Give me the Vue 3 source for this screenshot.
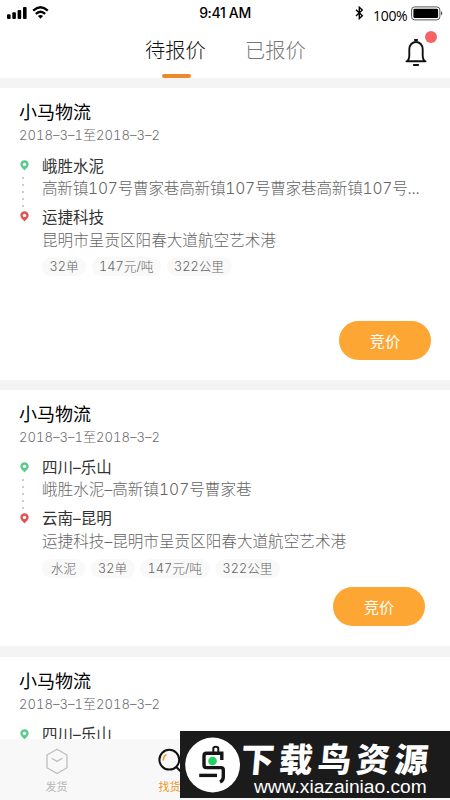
<script setup>
const cards = [
  {
    kind: 'first',
    from: '峨胜水泥',
    fromAddr: '高新镇107号曹家巷高新镇107号曹家巷高新镇107号...',
    to: '运捷科技',
    toAddr: '昆明市呈贡区阳春大道航空艺术港',
    tags: ['32单', '147元/吨', '322公里']
  },
  {
    kind: 'second',
    from: '四川–乐山',
    fromAddr: '峨胜水泥–高新镇107号曹家巷',
    to: '云南–昆明',
    toAddr: '运捷科技–昆明市呈贡区阳春大道航空艺术港',
    tags: ['水泥', '32单', '147元/吨', '322公里']
  },
  {
    kind: 'third',
    from: '四川–乐山'
  }
]
</script>

<template>
  <div class="screen">
    <header class="header">
      <div class="status">
        <div class="status-left">
          <svg class="signal" width="20" height="14" viewBox="0 0 20 14">
            <rect x="0" y="8.3" width="3.6" height="4.7" rx="1" />
            <rect x="5.3" y="6.2" width="3.6" height="6.8" rx="1" />
            <rect x="10.6" y="3.9" width="3.6" height="9.1" rx="1" />
            <rect x="16" y="1" width="3.6" height="12" rx="1" />
          </svg>
          <svg class="wifi" width="17" height="13" viewBox="0 0 17 13">
            <path d="M1.2 4.6Q8.5 -2 15.8 4.6" />
            <path d="M3.8 7.9Q8.5 3.6 13.2 7.9" />
            <path class="solid" d="M5.9 10Q8.5 7.8 11.1 10L8.5 12.7Z" />
          </svg>
        </div>
        <div class="time">9:41 AM</div>
        <div class="status-right">
          <svg class="bt" width="9" height="14" viewBox="0 0 9 14">
            <path d="M1 3.8L7.3 9.8L4.3 12.6V1.3L7.3 4.1L1 10" />
          </svg>
          <span class="percent">100%</span>
          <svg class="battery" width="33" height="15" viewBox="0 0 33 15">
            <rect class="case" x=".6" y=".9" width="28.3" height="13" rx="3.2" />
            <rect x="2.4" y="2.7" width="24.7" height="9.4" rx="1.4" />
            <path d="M30.3 5Q32.2 7.3 30.3 9.6Z" />
          </svg>
        </div>
      </div>
      <div class="tabs">
        <div class="tab active">待报价</div>
        <div class="tab">已报价</div>
        <div class="bell-box">
          <svg width="22" height="29" viewBox="0 0 22 29">
            <path class="line" d="M1.5 23.3H20.5M2.7 22.8Q4.3 20.8 4.3 18V11.3C4.3 6.9 7.3 4 11 4S17.7 6.9 17.7 11.3V18Q17.7 20.8 19.3 22.8" />
            <path class="line" d="M9.9 2H12.1M8.8 27H13.2" />
          </svg>
          <i class="dot"></i>
        </div>
      </div>
    </header>

    <main>
      <section v-for="card in cards" :key="card.kind" class="card" :class="card.kind">
        <h2>小马物流</h2>
        <div class="date">2018–3–1至2018–3–2</div>
        <div class="route">
          <div class="rail">
            <svg class="pin green" width="9" height="11" viewBox="0 0 9 11">
              <path d="M4.5 .3C2 .3.3 2 .3 4.3C.3 7 3 8.6 4.5 10.4C6 8.6 8.7 7 8.7 4.3C8.7 2 7 .3 4.5 .3Z" />
              <circle cx="4.5" cy="4.4" r="1.7" />
            </svg>
            <template v-if="card.to">
              <div class="dots"><i v-for="n in 5" :key="n"></i></div>
              <svg class="pin red" width="9" height="11" viewBox="0 0 9 11">
                <path d="M4.5 .3C2 .3.3 2 .3 4.3C.3 7 3 8.6 4.5 10.4C6 8.6 8.7 7 8.7 4.3C8.7 2 7 .3 4.5 .3Z" />
                <circle cx="4.5" cy="4.4" r="1.7" />
              </svg>
            </template>
          </div>
          <div class="stops">
            <div class="place">{{ card.from }}</div>
            <template v-if="card.to">
              <div class="addr origin">{{ card.fromAddr }}</div>
              <div class="place next">{{ card.to }}</div>
              <div class="addr">{{ card.toAddr }}</div>
              <div class="tags">
                <span v-for="tag in card.tags" :key="tag">{{ tag }}</span>
              </div>
            </template>
          </div>
        </div>
        <button v-if="card.to" class="bid">竞价</button>
      </section>
    </main>

    <nav class="nav">
      <div class="nav-item">
        <svg width="24" height="27" viewBox="0 0 24 27">
          <path class="box" d="M12 1.3L22 7V19.7L12 25.5L2 19.7V7Z M6.6 10.3L12 13.4L17.4 10.3" />
        </svg>
        <span>发货</span>
      </div>
      <div class="nav-item on">
        <svg width="24" height="27" viewBox="0 0 24 27">
          <circle class="lens" cx="11.3" cy="11.7" r="9.9" />
          <path class="lens" d="M18.3 19L23.3 24" />
          <path class="glint" d="M5.3 12Q5.3 8.4 7.9 6.8" />
        </svg>
        <span>找货</span>
      </div>
    </nav>

    <div class="mark">
      <svg class="logo" width="56" height="56" viewBox="0 0 56 56">
        <circle class="disc" cx="27.6" cy="28" r="27.4" />
        <path class="hook" d="M28.3 15V11.5Q28.3 9.8 30.8 9.8Q33.3 9.8 33.3 11.5V15" />
        <path class="stroke" d="M36.8 23V16.3H21.5Q19 16.3 19 19V28Q19 30.6 21.5 30.6H36Q38.3 30.6 38.3 33V40Q38.3 43.5 35 45" />
        <path class="stroke" d="M14.2 38.4H32" />
        <circle class="eye" cx="27.5" cy="24" r="4.3" />
      </svg>
      <div class="mark-text">
        <div class="mark-name">下载鸟资源</div>
        <div class="mark-url">www.xiazainiao.com</div>
      </div>
    </div>
  </div>
</template>

<style>
body {
  margin: 0;
  overflow: hidden;
}
</style>

<style scoped>
* {
  box-sizing: border-box;
}
.screen {
  position: relative;
  width: 450px;
  height: 800px;
  overflow: hidden;
  background: #f4f4f4;
  font-family: "Inter", "Noto Sans CJK SC", sans-serif;
  font-variant-numeric: tabular-nums;
}
svg {
  display: block;
  flex: none;
}
.header {
  height: 78px;
  background: #fff;
}
.status {
  height: 28px;
  display: grid;
  grid-template-columns: 150px 150px 150px;
}
.status-left {
  display: flex;
  gap: 5px;
  padding: 6px 0 0 7px;
}
.wifi path {
  fill: none;
  stroke: #000;
  stroke-width: 2.3;
}
.wifi .solid {
  fill: #000;
  stroke: none;
}
.time {
  text-align: center;
  font: 500 14px/26px "Inter", sans-serif;
  letter-spacing: -0.35px;
}
.status-right {
  display: flex;
  padding: 6px 5px 0 55px;
}
.bt path {
  fill: none;
  stroke: #000;
  stroke-width: 1.4;
}
.percent {
  width: 35px;
  margin: 0 3px 0 9px;
  font: 14px/19px "Open Sans", sans-serif;
  letter-spacing: -0.3px;
}
.battery .case {
  fill: none;
  stroke: #555;
  stroke-width: 1;
}
.tabs {
  display: flex;
  height: 50px;
  padding-left: 145px;
  gap: 39px;
}
.tab {
  width: 61px;
  font-size: 20.2px;
  font-weight: 300;
  line-height: 46px;
  color: #777;
  white-space: nowrap;
}
.tab.active {
  color: #111;
}
.tab.active::after {
  content: "";
  display: block;
  width: 29px;
  height: 4px;
  margin: 0 0 0 17px;
  border-radius: 2px;
  background: #e98b2b;
}
.bell-box {
  position: relative;
  width: 34px;
  margin-left: 60px;
  padding-top: 10px;
}
.bell-box .line {
  fill: none;
  stroke: #111;
  stroke-width: 1.9;
  stroke-linecap: round;
}
.dot {
  position: absolute;
  left: 20px;
  top: 3px;
  width: 12px;
  height: 12px;
  border-radius: 50%;
  background: #f86466;
}
.card {
  display: flex;
  flex-direction: column;
  margin-top: 10px;
  padding: 12px 19px 0;
  background: #fff;
}
.first {
  height: 292px;
}
.second {
  height: 256px;
}
.third {
  height: 82px;
  margin-top: 11px;
}
h2 {
  margin: 0;
  font-size: 18px;
  font-weight: 400;
  line-height: 25px;
  color: #000;
}
.date {
  font-size: 13.1px;
  line-height: 20px;
  font-weight: 300;
  color: #707070;
}
.route {
  display: flex;
  gap: 13px;
  margin-top: 11px;
}
.second .route,
.third .route {
  margin-top: 10px;
}
.rail {
  width: 10px;
  padding: 4px 0 0 1px;
}
.second .rail,
.third .rail {
  padding-top: 5px;
}
.green {
  fill: #5bca8b;
}
.red {
  fill: #e05552;
}
.pin circle {
  fill: #fff;
}
.dots {
  display: flex;
  flex-direction: column;
  gap: 5px;
  height: 40px;
  padding: 6px 0 0 2px;
}
.dots i {
  width: 2px;
  height: 2px;
  border-radius: 50%;
  background: #bdbdbd;
}
.stops {
  white-space: nowrap;
}
.place {
  font-size: 15.5px;
  line-height: 22px;
  color: #333;
}
.place.next {
  margin-top: 7px;
}
.addr {
  font-size: 15.6px;
  line-height: 23px;
  font-weight: 300;
  color: #666;
}
.origin {
  line-height: 22px;
}
.first .origin {
  letter-spacing: -0.22px;
}
.tags {
  display: flex;
  gap: 5.5px;
  margin-top: 5px;
}
.second .tags {
  margin-top: 6px;
}
.tags span {
  min-width: 43px;
  height: 19px;
  padding: 0 7.5px;
  border-radius: 10px;
  background: #f9f9f9;
  font-size: 12.7px;
  font-weight: 300;
  line-height: 19px;
  text-align: center;
  color: #666;
}
.bid {
  align-self: flex-end;
  width: 92px;
  height: 39px;
  margin-top: auto;
  padding: 0;
  border: 0;
  border-radius: 20px;
  background: #fea633;
  color: #fff;
  font: 15.3px/39px "Noto Sans CJK SC", sans-serif;
}
.first .bid {
  margin-bottom: 20px;
}
.second .bid {
  margin: auto 6px 20px 0;
}
.nav {
  position: absolute;
  left: 0;
  right: 0;
  bottom: 0;
  height: 61px;
  display: grid;
  grid-template-columns: repeat(4, 113px);
  background: #f8f8f8;
}
.nav-item {
  display: flex;
  flex-direction: column;
  align-items: center;
  padding-top: 9px;
  color: #b5b5b5;
  font-size: 11px;
  line-height: 20px;
}
.nav-item span {
  margin-top: 2px;
}
.on {
  color: #ef9423;
}
.box {
  fill: none;
  stroke: #bdbdbd;
  stroke-width: 1.3;
  stroke-linejoin: round;
}
.lens {
  fill: none;
  stroke: #111;
  stroke-width: 2;
}
.glint {
  fill: none;
  stroke: #f09a2c;
  stroke-width: 1.5;
  stroke-linecap: round;
}
.mark {
  position: absolute;
  left: 180px;
  top: 731px;
  width: 270px;
  height: 67px;
  display: flex;
  padding: 6px 0 0 5px;
  background: #1b1b1b;
  color: #fff;
}
.disc {
  fill: #fff;
}
.stroke {
  fill: none;
  stroke: #151515;
  stroke-width: 3.4;
}
.hook {
  fill: none;
  stroke: #151515;
  stroke-width: 2;
}
.eye {
  fill: #20d35e;
}
.mark-text {
  margin-left: 2px;
  white-space: nowrap;
}
.mark-name {
  height: 39px;
  margin-left: -2px;
  font: 900 33.5px/41px "Noto Sans CJK SC", sans-serif;
  letter-spacing: 5px;
  transform: skewX(-5deg);
}
.mark-url {
  padding-left: 11px;
  font: 19.2px/22px "Liberation Sans", sans-serif;
}
</style>
